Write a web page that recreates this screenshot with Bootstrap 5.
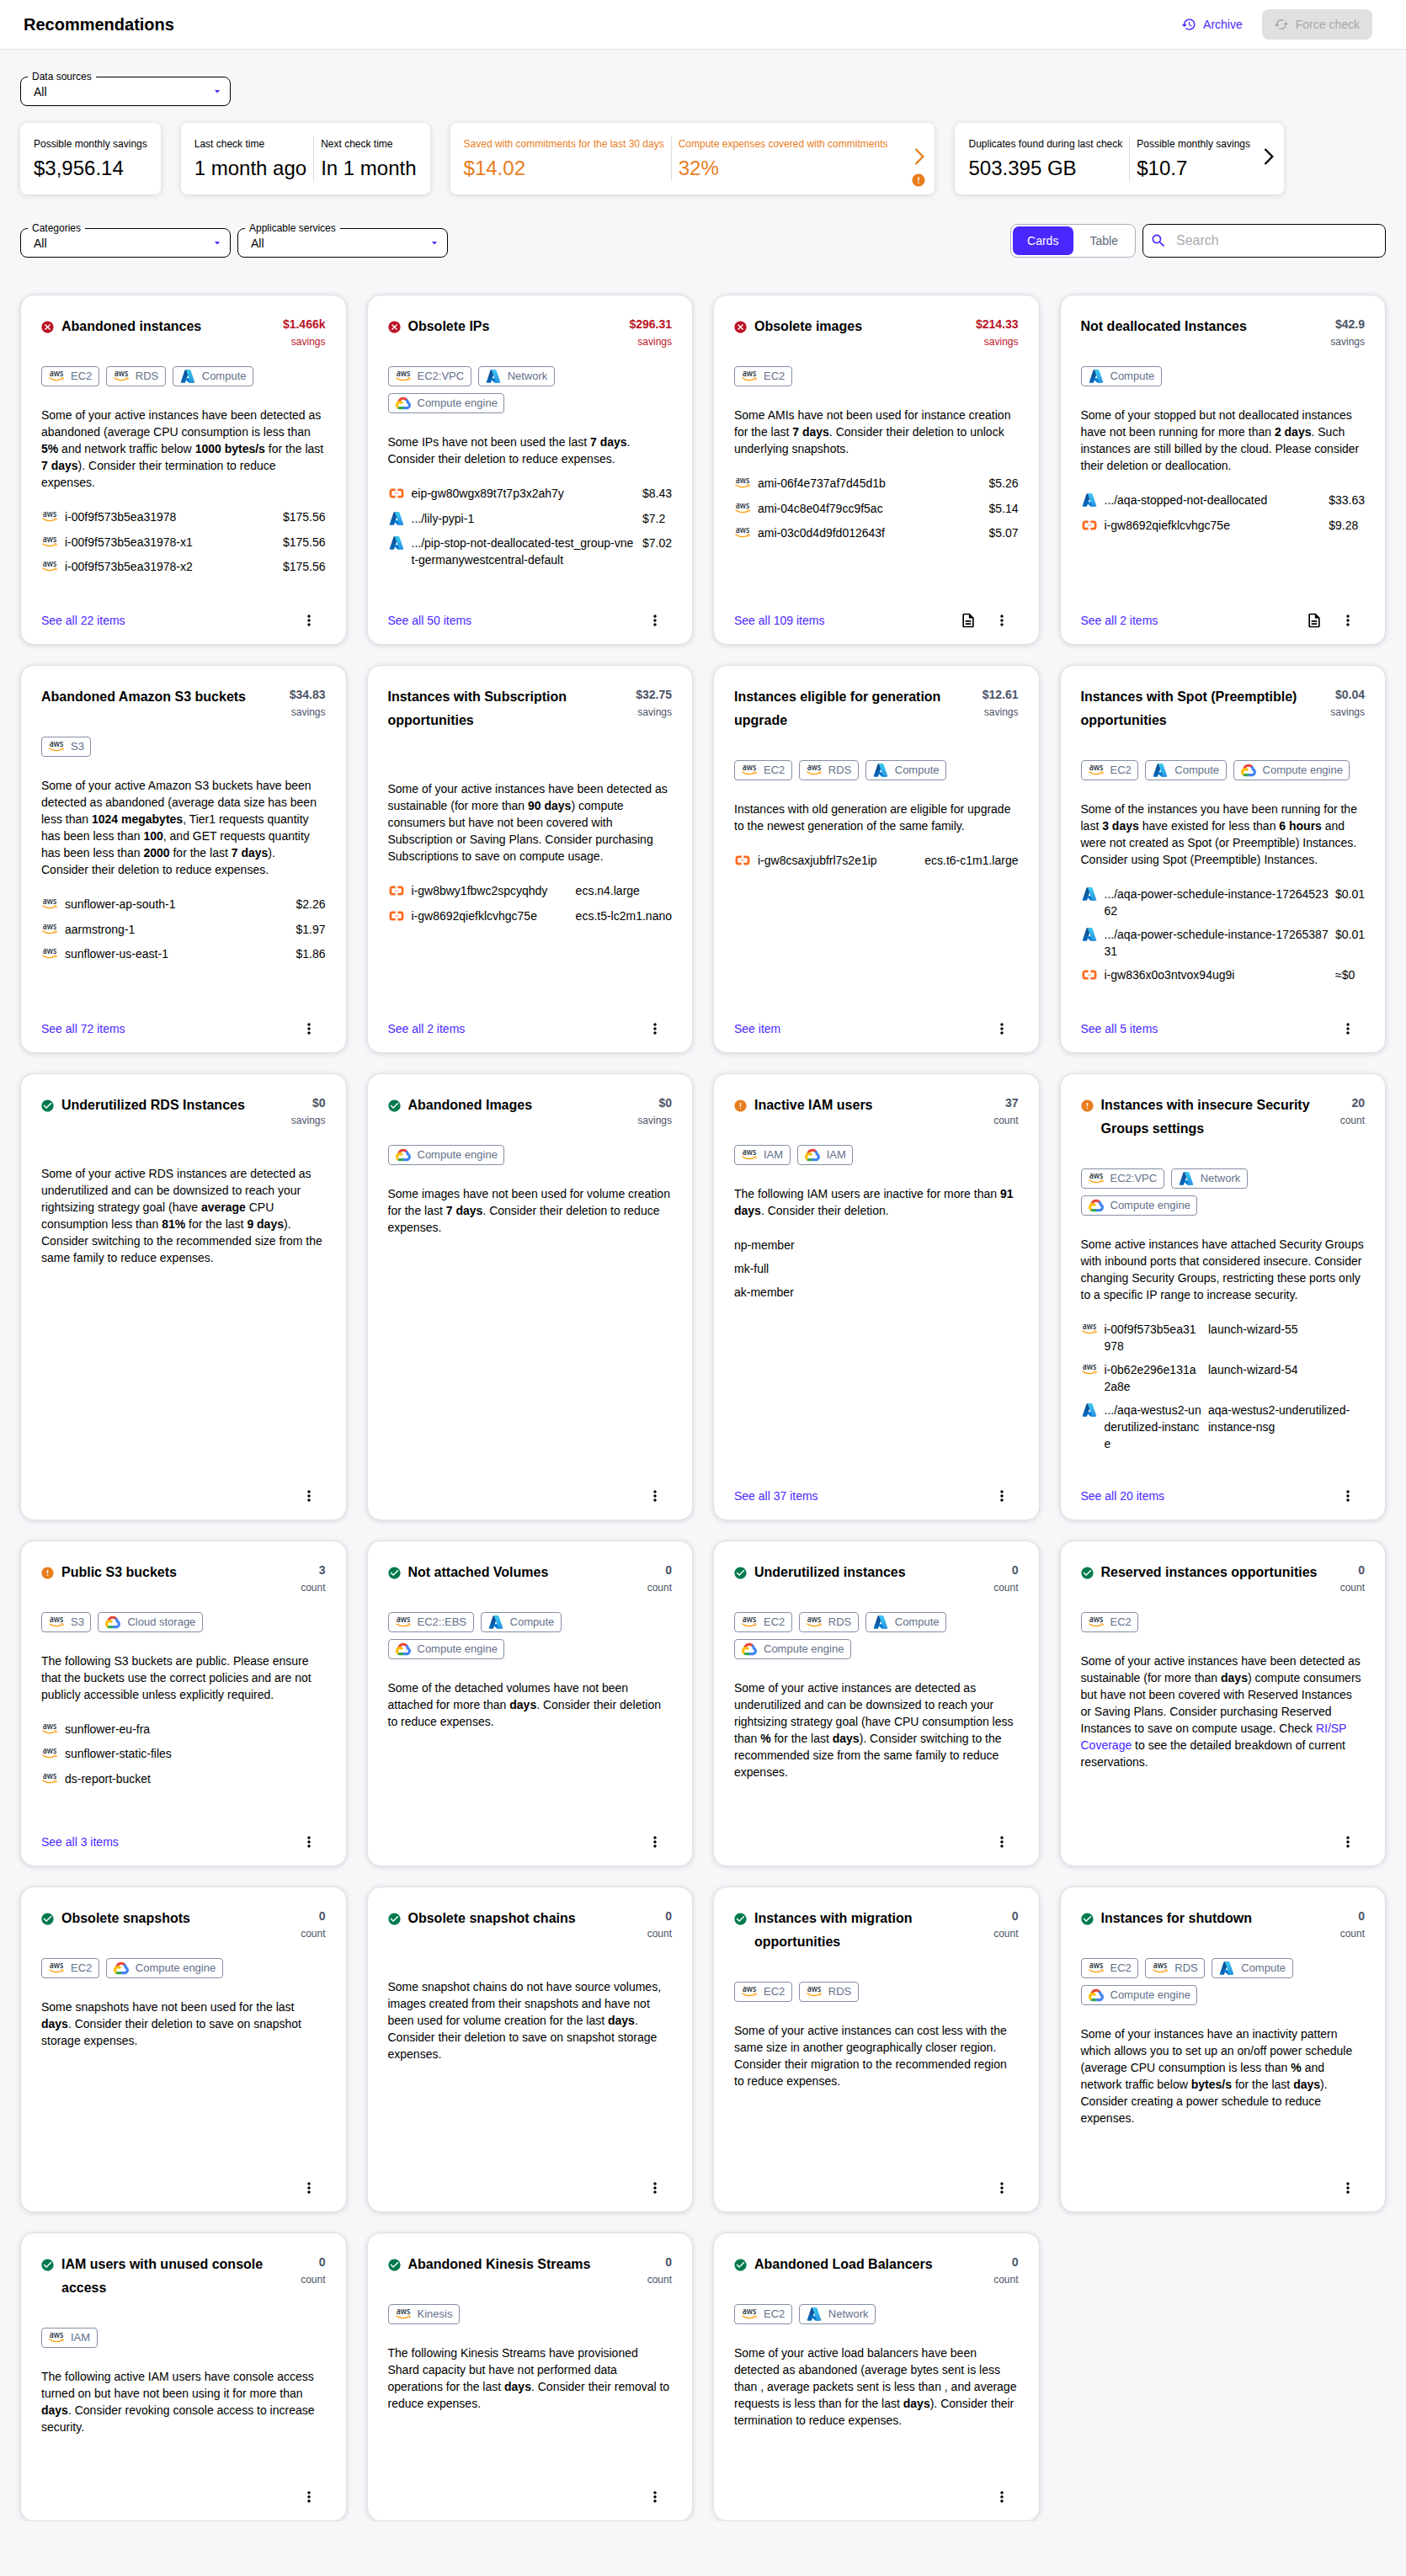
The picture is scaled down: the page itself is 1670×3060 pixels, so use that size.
<!DOCTYPE html>
<html lang="en">
<head>
<meta charset="utf-8">
<meta name="viewport" content="width=device-width, initial-scale=1">
<title>Recommendations</title>
<link href="https://cdn.jsdelivr.net/npm/bootstrap@5.3.0/dist/css/bootstrap.min.css" rel="stylesheet">
<style>
body{font-family:"Liberation Sans",Arial,sans-serif;font-size:14px;line-height:20px;color:#000;background:#f6f7f9}
a{color:#4a27ff;text-decoration:none}
svg{display:block;flex:none}
.topbar{height:59px;background:#fff;border-bottom:1px solid #e1e3e5;padding:0 40px 0 28px}
.topbar h1{font-size:20px;line-height:28px;font-weight:700}
.btn-archive{font-size:14px;line-height:20px;color:#4a27ff;padding:8px 15px 8px 16px;gap:8px;display:flex;align-items:center}
.btn-force{font-size:14px;line-height:20px;color:#a8a8a8;background:#e0e0e0;border-radius:8px;height:36px;padding:0 15px 0 14px;gap:8px;display:flex;align-items:center}
.picker{width:250px;height:41px;margin:0;padding:1px 11px 0 15px;border:1px solid #000;border-radius:8px;background:#fff}
.picker legend{float:none;width:auto;font-size:12px;line-height:12px;margin:0 0 0 -7px;padding:0 5px}
.picker-val{display:flex;justify-content:space-between;align-items:center;height:22px}
.summary{margin-top:20px}
.filters{margin-top:34px}
.tile{background:#fff;border-radius:8px;height:85px;padding:16px;box-shadow:0 1px 7px rgba(20,22,35,.15);display:flex}
.tile-go{padding-right:12px}
.tile-col{padding-right:8px}
.tile-col+.tile-col{border-left:1px solid #d9dbe0;padding-left:8px}
.tile-col:last-of-type{padding-right:0}
.tile-cap{font-size:12px;line-height:18px;white-space:nowrap}
.tile-num{font-size:24px;line-height:32px;white-space:nowrap;margin-top:4px}
.tile-warn{color:#e87d1e}
.tile-side{display:flex;flex-direction:column;align-items:center;width:12px;margin-left:16px;padding-top:14px}
.tile-warn .tile-side{margin-left:32px}
.tile-alert{margin:9px 0 0 -2px}
.switcher{width:149px;height:40px;border:1px solid #abafb9;border-radius:8px;background:#fff;padding:2px}
.switcher .btn{font-size:14px;line-height:20px;width:72px;padding:0;border:0;border-radius:7px;color:#60687c}
.switcher .btn:last-child{padding-left:2px}
.switcher .btn.active{background:#4a27ff;color:#fff}
.finder{width:289px;height:40px;border:1px solid #000;border-radius:8px;background:#fff;padding:0 8px;gap:11px}
.finder input{border:0;outline:0;width:220px;font-size:16px;padding:0;background:none}
.finder input::placeholder{color:#a9aab0;opacity:1}
.rec-grid{display:grid;grid-template-columns:repeat(4,minmax(0,1fr));gap:24px;margin-top:44px}
.rec{background:#fff;border:1px solid #e0e1e4;border-radius:16px;padding:23px 24px 12px;box-shadow:0 1px 6px rgba(20,22,35,.14);display:flex;flex-direction:column}
.rec-head{display:flex;justify-content:space-between;align-items:flex-start;gap:8px}
.rec-title{font-size:16px;line-height:28px;font-weight:700;margin:0;padding-bottom:33px;display:flex}
.rec-title svg{width:17px;height:17px;margin:6px 8px 0 -1px}
.rec-sum{text-align:right;color:#4c5567;font-size:12px;line-height:20px}
.rec-sum b{display:block;font-size:14px;line-height:22px}
.rec-sum.hot{color:#bb1425}
.tags{display:flex;flex-wrap:wrap;gap:8px}
.tag{height:24px;border:1px solid #858fa3;border-radius:4px;padding:0 7.500px 0 8px;gap:8px;display:flex;align-items:center;font-size:13px;color:#64708a}
.rec-text{margin:24px 0 17px}
.items{width:100%;min-height:8px;border-collapse:collapse;margin:0}
.items td{padding:4px 0;vertical-align:top;line-height:20px}
.items td:first-child{width:100%;word-break:break-all}
.items td:nth-child(2){padding-left:8px;white-space:nowrap}
.items.wide td:nth-child(2){white-space:normal;min-width:194px}
.nm{display:flex;min-height:21.67px;padding-left:1px;gap:9px}
.nm svg{margin-top:1px}
.rec-foot{margin-top:auto;padding-top:32px;display:flex;align-items:center;justify-content:space-between}
.rec-foot .tools{display:flex;margin-left:auto}
.rec-foot .tool{width:40px;height:32px;display:flex;align-items:center;justify-content:center;border:0;background:none;padding:0;color:#000}
</style>
<script src="https://cdn.jsdelivr.net/npm/bootstrap@5.3.0/dist/js/bootstrap.bundle.min.js"></script>
</head>
<body>
<svg width="0" height="0" class="position-absolute">
<defs>
<linearGradient id="azA" x1="0.6" y1="0" x2="0.3" y2="1"><stop offset="0" stop-color="#114a8b"/><stop offset="1" stop-color="#0669bc"/></linearGradient>
<linearGradient id="azB" x1="0.4" y1="0" x2="0.6" y2="1"><stop offset="0" stop-color="#3ccbf4"/><stop offset="1" stop-color="#2892df"/></linearGradient>
<symbol id="aws" viewBox="0 0 18 18"><text x="9" y="9.300" text-anchor="middle" textLength="16.500" lengthAdjust="spacingAndGlyphs" font-family="Open Sans,sans-serif" font-weight="600" font-size="10.500" fill="#252f3e">aws</text><path d="M.8 11c4.600 3.300 10.800 3.400 14.800 1.100" fill="none" stroke="#f90" stroke-width="1.200" stroke-linecap="round"/><path d="M14.300 11.100c1.200-.5 2.700-.4 2.900-.1.200.4-.1 1.700-.9 2.600" fill="none" stroke="#f90" stroke-width="1"/></symbol>
<symbol id="azure" viewBox="0 0 96 96"><path fill="url(#azA)" d="M33.338 6.544h26.038l-27.03 80.087a4.152 4.152 0 0 1-3.933 2.824H8.149a4.145 4.145 0 0 1-3.928-5.470L29.404 9.368a4.152 4.152 0 0 1 3.934-2.825z"/><path fill="#0078d4" d="M71.175 60.261h-41.290a1.911 1.911 0 0 0-1.305 3.309l26.532 24.764a4.171 4.171 0 0 0 2.846 1.121h23.380z"/><path fill="url(#azB)" d="M66.595 9.364a4.145 4.145 0 0 0-3.928-2.820H33.648a4.146 4.146 0 0 1 3.928 2.820l25.184 74.620a4.146 4.146 0 0 1-3.928 5.472h29.020a4.146 4.146 0 0 0 3.927-5.472z"/></symbol>
<symbol id="gcp" viewBox="0 0 256 206"><path fill="#ea4335" d="M170.252 56.819l22.253-22.253 1.483-9.370C153.437-11.677 88.976-7.496 52.420 33.920 42.267 45.423 34.734 59.764 30.717 74.573l7.970-1.123 44.505-7.340 3.436-3.513c19.797-21.742 53.270-24.667 76.128-6.168l7.496.39z"/><path fill="#4285f4" d="M224.205 73.918a100.249 100.249 0 0 0-30.217-48.722l-31.232 31.232a55.515 55.515 0 0 1 20.379 44.037v5.544c15.350 0 27.797 12.445 27.797 27.796 0 15.352-12.446 27.573-27.797 27.573h-55.671l-5.466 5.934v33.340l5.466 5.231h55.670c39.930.311 72.553-31.494 72.864-71.424a72.303 72.303 0 0 0-31.793-60.540"/><path fill="#34a853" d="M71.870 205.796h55.593V161.290H71.870a27.275 27.275 0 0 1-11.500-2.498l-7.887 2.420-22.409 22.253-1.952 7.574c12.567 9.489 27.900 14.825 43.647 14.757"/><path fill="#fbbc05" d="M71.870 61.425C31.940 61.664-.237 94.228.001 134.158a72.301 72.301 0 0 0 28.222 56.880l32.248-32.246c-13.990-6.322-20.208-22.786-13.887-36.776 6.320-13.990 22.786-20.208 36.775-13.888a27.796 27.796 0 0 1 13.887 13.888l32.248-32.248A72.224 72.224 0 0 0 71.870 61.425"/></symbol>
<symbol id="ali" viewBox="0 0 18 18"><path d="M7.600 4.800H3.900A2.100 2.100 0 0 0 1.900 6.800v4.400a2.100 2.100 0 0 0 2 2h3.700M10.400 4.800h3.700a2.100 2.100 0 0 1 2 2v4.400a2.100 2.100 0 0 1-2 2h-3.700" fill="none" stroke="#ff6a1f" stroke-width="2.700"/><path d="M7.200 9h3.600" stroke="#ff6a1f" stroke-width=".8"/></symbol>
<symbol id="bad" viewBox="0 0 24 24"><path fill="#bb1425" d="M12 2C6.470 2 2 6.470 2 12s4.470 10 10 10 10-4.470 10-10S17.530 2 12 2zm5 13.590L15.590 17 12 13.410 8.410 17 7 15.590 10.590 12 7 8.410 8.410 7 12 10.590 15.590 7 17 8.410 13.410 12z"/></symbol>
<symbol id="good" viewBox="0 0 24 24"><path fill="#007a4d" d="M12 2C6.480 2 2 6.480 2 12s4.480 10 10 10 10-4.480 10-10S17.520 2 12 2zm-2 15-5-5 1.410-1.410L10 14.170l7.590-7.590L19 8z"/></symbol>
<symbol id="warn" viewBox="0 0 24 24"><path fill="#e87d1e" d="M12 2C6.480 2 2 6.480 2 12s4.480 10 10 10 10-4.480 10-10S17.520 2 12 2zm1 15h-2v-2h2zm0-4h-2V7h2z"/></symbol>
<symbol id="dots" viewBox="0 0 24 24"><path d="M12 8c1.100 0 2-.9 2-2s-.9-2-2-2-2 .9-2 2 .9 2 2 2m0 2c-1.100 0-2 .9-2 2s.9 2 2 2 2-.9 2-2-.9-2-2-2m0 6c-1.100 0-2 .9-2 2s.9 2 2 2 2-.9 2-2-.9-2-2-2"/></symbol>
<symbol id="doc" viewBox="0 0 24 24"><path d="M8 16h8v2H8zm0-4h8v2H8zm6-10H6c-1.100 0-2 .9-2 2v16c0 1.100.89 2 1.990 2H18c1.100 0 2-.9 2-2V8zm4 18H6V4h7v5h5z"/></symbol>
<symbol id="caret" viewBox="0 0 6 4"><path fill="#4a27ff" d="M0 0h6L3 3.600z"/></symbol>
<symbol id="chev" viewBox="0 0 12 20"><path d="M1.500 1l8.800 9-8.800 9" fill="none" stroke="currentColor" stroke-width="2.300"/></symbol>
</defs>
</svg>

<header class="topbar d-flex align-items-center justify-content-between">
<h1 class="m-0">Recommendations</h1>
<div class="d-flex align-items-center gap-2">
<a href="#" class="btn-archive"><svg width="18" height="18" viewBox="0 0 24 24" fill="currentColor"><path d="M13 3c-4.970 0-9 4.030-9 9H1l3.890 3.890.07.14L9 12H6c0-3.870 3.130-7 7-7s7 3.130 7 7-3.130 7-7 7c-1.930 0-3.680-.79-4.940-2.060l-1.420 1.420C8.270 19.990 10.510 21 13 21c4.970 0 9-4.030 9-9s-4.030-9-9-9zm-1 5v5l4.280 2.540.72-1.210-3.500-2.080V8z"/></svg>Archive</a>
<button class="btn-force border-0" disabled><svg width="18" height="18" viewBox="0 0 24 24" fill="currentColor"><path d="m19 8-4 4h3c0 3.310-2.690 6-6 6-1.010 0-1.970-.25-2.800-.7l-1.460 1.460C8.970 19.540 10.430 20 12 20c4.420 0 8-3.580 8-8h3zM6 12c0-3.310 2.690-6 6-6 1.010 0 1.970.25 2.800.7l1.460-1.460C15.030 4.460 13.570 4 12 4c-4.420 0-8 3.580-8 8H1l4 4 4-4z"/></svg>Force check</button>
</div>
</header>

<main class="px-4">
<div class="pt-4"><fieldset class="picker" style="margin-top:2px"><legend>Data sources</legend><div class="picker-val">All<svg width="8" height="4"><use href="#caret"/></svg></div></fieldset></div>

<section class="summary d-flex gap-4">
<div class="tile"><div class="tile-col"><div class="tile-cap">Possible monthly savings</div><div class="tile-num">$3,956.14</div></div></div>
<div class="tile"><div class="tile-col"><div class="tile-cap">Last check time</div><div class="tile-num">1 month ago</div></div><div class="tile-col"><div class="tile-cap">Next check time</div><div class="tile-num">In 1 month</div></div></div>
<div class="tile tile-go tile-warn"><div class="tile-col"><div class="tile-cap">Saved with commitments for the last 30 days</div><div class="tile-num">$14.02</div></div><div class="tile-col"><div class="tile-cap">Compute expenses covered with commitments</div><div class="tile-num">32%</div></div><aside class="tile-side"><svg width="12" height="20"><use href="#chev"/></svg><svg class="tile-alert" width="18" height="18"><use href="#warn"/></svg></aside></div>
<div class="tile tile-go"><div class="tile-col"><div class="tile-cap">Duplicates found during last check</div><div class="tile-num">503.395 GB</div></div><div class="tile-col"><div class="tile-cap">Possible monthly savings</div><div class="tile-num">$10.7</div></div><aside class="tile-side"><svg width="12" height="20"><use href="#chev"/></svg></aside></div>
</section>

<section class="filters d-flex align-items-end gap-2">
<fieldset class="picker"><legend>Categories</legend><div class="picker-val">All<svg width="8" height="4"><use href="#caret"/></svg></div></fieldset>
<fieldset class="picker"><legend>Applicable services</legend><div class="picker-val">All<svg width="8" height="4"><use href="#caret"/></svg></div></fieldset>
<div class="switcher d-flex ms-auto"><button class="btn active">Cards</button><button class="btn">Table</button></div>
<div class="finder d-flex align-items-center"><svg width="20" height="20" viewBox="0 0 24 24" fill="#4a27ff"><path d="M15.500 14h-.79l-.28-.27C15.410 12.590 16 11.110 16 9.500 16 5.910 13.090 3 9.500 3S3 5.910 3 9.500 5.910 16 9.500 16c1.610 0 3.090-.59 4.230-1.570l.27.28v.79l5 4.990L20.490 19zm-6 0C7.010 14 5 11.990 5 9.500S7.010 5 9.500 5 14 7.010 14 9.500 11.990 14 9.500 14"/></svg><input type="text" placeholder="Search"></div>
</section>

<section class="rec-grid">

<article class="rec"><div class="rec-head"><h2 class="rec-title"><svg><use href="#bad"/></svg>Abandoned instances</h2><div class="rec-sum hot"><b>$1.466k</b>savings</div></div>
<div class="tags"><span class="tag"><svg width="18" height="18"><use href="#aws"/></svg>EC2</span><span class="tag"><svg width="18" height="18"><use href="#aws"/></svg>RDS</span><span class="tag"><svg width="18" height="18"><use href="#azure"/></svg>Compute</span></div>
<p class="rec-text">Some of your active instances have been detected as abandoned (average CPU consumption is less than <b>5%</b> and network traffic below <b>1000 bytes/s</b> for the last <b>7 days</b>). Consider their termination to reduce expenses.</p>
<table class="items"><tr><td><div class="nm"><svg width="18" height="18"><use href="#aws"/></svg>i-00f9f573b5ea31978</div></td><td>$175.56</td></tr><tr><td><div class="nm"><svg width="18" height="18"><use href="#aws"/></svg>i-00f9f573b5ea31978-x1</div></td><td>$175.56</td></tr><tr><td><div class="nm"><svg width="18" height="18"><use href="#aws"/></svg>i-00f9f573b5ea31978-x2</div></td><td>$175.56</td></tr></table>
<div class="rec-foot"><a href="#">See all 22 items</a><div class="tools"><button class="tool"><svg width="20" height="20"><use href="#dots"/></svg></button></div></div></article>

<article class="rec"><div class="rec-head"><h2 class="rec-title"><svg><use href="#bad"/></svg>Obsolete IPs</h2><div class="rec-sum hot"><b>$296.31</b>savings</div></div>
<div class="tags"><span class="tag"><svg width="18" height="18"><use href="#aws"/></svg>EC2:VPC</span><span class="tag"><svg width="18" height="18"><use href="#azure"/></svg>Network</span><span class="tag"><svg width="18" height="18"><use href="#gcp"/></svg>Compute engine</span></div>
<p class="rec-text">Some IPs have not been used the last <b>7 days</b>. Consider their deletion to reduce expenses.</p>
<table class="items"><tr><td><div class="nm"><svg width="18" height="18"><use href="#ali"/></svg>eip-gw80wgx89t7t7p3x2ah7y</div></td><td>$8.43</td></tr><tr><td><div class="nm"><svg width="18" height="18"><use href="#azure"/></svg>.../lily-pypi-1</div></td><td>$7.2</td></tr><tr><td><div class="nm"><svg width="18" height="18"><use href="#azure"/></svg>.../pip-stop-not-deallocated-test_group-vnet-germanywestcentral-default</div></td><td>$7.02</td></tr></table>
<div class="rec-foot"><a href="#">See all 50 items</a><div class="tools"><button class="tool"><svg width="20" height="20"><use href="#dots"/></svg></button></div></div></article>

<article class="rec"><div class="rec-head"><h2 class="rec-title"><svg><use href="#bad"/></svg>Obsolete images</h2><div class="rec-sum hot"><b>$214.33</b>savings</div></div>
<div class="tags"><span class="tag"><svg width="18" height="18"><use href="#aws"/></svg>EC2</span></div>
<p class="rec-text">Some AMIs have not been used for instance creation for the last <b>7 days</b>. Consider their deletion to unlock underlying snapshots.</p>
<table class="items"><tr><td><div class="nm"><svg width="18" height="18"><use href="#aws"/></svg>ami-06f4e737af7d45d1b</div></td><td>$5.26</td></tr><tr><td><div class="nm"><svg width="18" height="18"><use href="#aws"/></svg>ami-04c8e04f79cc9f5ac</div></td><td>$5.14</td></tr><tr><td><div class="nm"><svg width="18" height="18"><use href="#aws"/></svg>ami-03c0d4d9fd012643f</div></td><td>$5.07</td></tr></table>
<div class="rec-foot"><a href="#">See all 109 items</a><div class="tools"><button class="tool"><svg width="20" height="20"><use href="#doc"/></svg></button><button class="tool"><svg width="20" height="20"><use href="#dots"/></svg></button></div></div></article>

<article class="rec"><div class="rec-head"><h2 class="rec-title">Not deallocated Instances</h2><div class="rec-sum"><b>$42.9</b>savings</div></div>
<div class="tags"><span class="tag"><svg width="18" height="18"><use href="#azure"/></svg>Compute</span></div>
<p class="rec-text">Some of your stopped but not deallocated instances have not been running for more than <b>2 days</b>. Such instances are still billed by the cloud. Please consider their deletion or deallocation.</p>
<table class="items"><tr><td><div class="nm"><svg width="18" height="18"><use href="#azure"/></svg>.../aqa-stopped-not-deallocated</div></td><td>$33.63</td></tr><tr><td><div class="nm"><svg width="18" height="18"><use href="#ali"/></svg>i-gw8692qiefklcvhgc75e</div></td><td>$9.28</td></tr></table>
<div class="rec-foot"><a href="#">See all 2 items</a><div class="tools"><button class="tool"><svg width="20" height="20"><use href="#doc"/></svg></button><button class="tool"><svg width="20" height="20"><use href="#dots"/></svg></button></div></div></article>

<article class="rec"><div class="rec-head"><h2 class="rec-title">Abandoned Amazon S3 buckets</h2><div class="rec-sum"><b>$34.83</b>savings</div></div>
<div class="tags"><span class="tag"><svg width="18" height="18"><use href="#aws"/></svg>S3</span></div>
<p class="rec-text">Some of your active Amazon S3 buckets have been detected as abandoned (average data size has been less than <b>1024 megabytes</b>, Tier1 requests quantity has been less than <b>100</b>, and GET requests quantity has been less than <b>2000</b> for the last <b>7 days</b>). Consider their deletion to reduce expenses.</p>
<table class="items"><tr><td><div class="nm"><svg width="18" height="18"><use href="#aws"/></svg>sunflower-ap-south-1</div></td><td>$2.26</td></tr><tr><td><div class="nm"><svg width="18" height="18"><use href="#aws"/></svg>aarmstrong-1</div></td><td>$1.97</td></tr><tr><td><div class="nm"><svg width="18" height="18"><use href="#aws"/></svg>sunflower-us-east-1</div></td><td>$1.86</td></tr></table>
<div class="rec-foot"><a href="#">See all 72 items</a><div class="tools"><button class="tool"><svg width="20" height="20"><use href="#dots"/></svg></button></div></div></article>

<article class="rec"><div class="rec-head"><h2 class="rec-title">Instances with Subscription opportunities</h2><div class="rec-sum"><b>$32.75</b>savings</div></div>
<p class="rec-text">Some of your active instances have been detected as sustainable (for more than <b>90 days</b>) compute consumers but have not been covered with Subscription or Saving Plans. Consider purchasing Subscriptions to save on compute usage.</p>
<table class="items"><tr><td><div class="nm"><svg width="18" height="18"><use href="#ali"/></svg>i-gw8bwy1fbwc2spcyqhdy</div></td><td>ecs.n4.large</td></tr><tr><td><div class="nm"><svg width="18" height="18"><use href="#ali"/></svg>i-gw8692qiefklcvhgc75e</div></td><td>ecs.t5-lc2m1.nano</td></tr></table>
<div class="rec-foot"><a href="#">See all 2 items</a><div class="tools"><button class="tool"><svg width="20" height="20"><use href="#dots"/></svg></button></div></div></article>

<article class="rec"><div class="rec-head"><h2 class="rec-title">Instances eligible for generation upgrade</h2><div class="rec-sum"><b>$12.61</b>savings</div></div>
<div class="tags"><span class="tag"><svg width="18" height="18"><use href="#aws"/></svg>EC2</span><span class="tag"><svg width="18" height="18"><use href="#aws"/></svg>RDS</span><span class="tag"><svg width="18" height="18"><use href="#azure"/></svg>Compute</span></div>
<p class="rec-text">Instances with old generation are eligible for upgrade to the newest generation of the same family.</p>
<table class="items"><tr><td><div class="nm"><svg width="18" height="18"><use href="#ali"/></svg>i-gw8csaxjubfrl7s2e1ip</div></td><td>ecs.t6-c1m1.large</td></tr></table>
<div class="rec-foot"><a href="#">See item</a><div class="tools"><button class="tool"><svg width="20" height="20"><use href="#dots"/></svg></button></div></div></article>

<article class="rec"><div class="rec-head"><h2 class="rec-title">Instances with Spot (Preemptible) opportunities</h2><div class="rec-sum"><b>$0.04</b>savings</div></div>
<div class="tags"><span class="tag"><svg width="18" height="18"><use href="#aws"/></svg>EC2</span><span class="tag"><svg width="18" height="18"><use href="#azure"/></svg>Compute</span><span class="tag"><svg width="18" height="18"><use href="#gcp"/></svg>Compute engine</span></div>
<p class="rec-text">Some of the instances you have been running for the last <b>3 days</b> have existed for less than <b>6 hours</b> and were not created as Spot (or Preemptible) Instances. Consider using Spot (Preemptible) Instances.</p>
<table class="items"><tr><td><div class="nm"><svg width="18" height="18"><use href="#azure"/></svg>.../aqa-power-schedule-instance-1726452362</div></td><td>$0.01</td></tr><tr><td><div class="nm"><svg width="18" height="18"><use href="#azure"/></svg>.../aqa-power-schedule-instance-1726538731</div></td><td>$0.01</td></tr><tr><td><div class="nm"><svg width="18" height="18"><use href="#ali"/></svg>i-gw836x0o3ntvox94ug9i</div></td><td>≈$0</td></tr></table>
<div class="rec-foot"><a href="#">See all 5 items</a><div class="tools"><button class="tool"><svg width="20" height="20"><use href="#dots"/></svg></button></div></div></article>

<article class="rec"><div class="rec-head"><h2 class="rec-title"><svg><use href="#good"/></svg>Underutilized RDS Instances</h2><div class="rec-sum"><b>$0</b>savings</div></div>
<p class="rec-text">Some of your active RDS instances are detected as underutilized and can be downsized to reach your rightsizing strategy goal (have <b>average</b> CPU consumption less than <b>81%</b> for the last <b>9 days</b>). Consider switching to the recommended size from the same family to reduce expenses.</p>
<div class="rec-foot"><div class="tools"><button class="tool"><svg width="20" height="20"><use href="#dots"/></svg></button></div></div></article>

<article class="rec"><div class="rec-head"><h2 class="rec-title"><svg><use href="#good"/></svg>Abandoned Images</h2><div class="rec-sum"><b>$0</b>savings</div></div>
<div class="tags"><span class="tag"><svg width="18" height="18"><use href="#gcp"/></svg>Compute engine</span></div>
<p class="rec-text">Some images have not been used for volume creation for the last <b>7 days</b>. Consider their deletion to reduce expenses.</p>
<div class="rec-foot"><div class="tools"><button class="tool"><svg width="20" height="20"><use href="#dots"/></svg></button></div></div></article>

<article class="rec"><div class="rec-head"><h2 class="rec-title"><svg><use href="#warn"/></svg>Inactive IAM users</h2><div class="rec-sum"><b>37</b>count</div></div>
<div class="tags"><span class="tag"><svg width="18" height="18"><use href="#aws"/></svg>IAM</span><span class="tag"><svg width="18" height="18"><use href="#gcp"/></svg>IAM</span></div>
<p class="rec-text">The following IAM users are inactive for more than <b>91 days</b>. Consider their deletion.</p>
<table class="items"><tr><td>np-member</td></tr><tr><td>mk-full</td></tr><tr><td>ak-member</td></tr></table>
<div class="rec-foot"><a href="#">See all 37 items</a><div class="tools"><button class="tool"><svg width="20" height="20"><use href="#dots"/></svg></button></div></div></article>

<article class="rec"><div class="rec-head"><h2 class="rec-title"><svg><use href="#warn"/></svg>Instances with insecure Security Groups settings</h2><div class="rec-sum"><b>20</b>count</div></div>
<div class="tags"><span class="tag"><svg width="18" height="18"><use href="#aws"/></svg>EC2:VPC</span><span class="tag"><svg width="18" height="18"><use href="#azure"/></svg>Network</span><span class="tag"><svg width="18" height="18"><use href="#gcp"/></svg>Compute engine</span></div>
<p class="rec-text">Some active instances have attached Security Groups with inbound ports that considered insecure. Consider changing Security Groups, restricting these ports only to a specific IP range to increase security.</p>
<table class="items wide"><tr><td><div class="nm"><svg width="18" height="18"><use href="#aws"/></svg>i-00f9f573b5ea31978</div></td><td>launch-wizard-55</td></tr><tr><td><div class="nm"><svg width="18" height="18"><use href="#aws"/></svg>i-0b62e296e131a2a8e</div></td><td>launch-wizard-54</td></tr><tr><td><div class="nm"><svg width="18" height="18"><use href="#azure"/></svg>.../aqa-westus2-underutilized-instance</div></td><td>aqa-westus2-underutilized-instance-nsg</td></tr></table>
<div class="rec-foot"><a href="#">See all 20 items</a><div class="tools"><button class="tool"><svg width="20" height="20"><use href="#dots"/></svg></button></div></div></article>

<article class="rec"><div class="rec-head"><h2 class="rec-title"><svg><use href="#warn"/></svg>Public S3 buckets</h2><div class="rec-sum"><b>3</b>count</div></div>
<div class="tags"><span class="tag"><svg width="18" height="18"><use href="#aws"/></svg>S3</span><span class="tag"><svg width="18" height="18"><use href="#gcp"/></svg>Cloud storage</span></div>
<p class="rec-text">The following S3 buckets are public. Please ensure that the buckets use the correct policies and are not publicly accessible unless explicitly required.</p>
<table class="items"><tr><td><div class="nm"><svg width="18" height="18"><use href="#aws"/></svg>sunflower-eu-fra</div></td></tr><tr><td><div class="nm"><svg width="18" height="18"><use href="#aws"/></svg>sunflower-static-files</div></td></tr><tr><td><div class="nm"><svg width="18" height="18"><use href="#aws"/></svg>ds-report-bucket</div></td></tr></table>
<div class="rec-foot"><a href="#">See all 3 items</a><div class="tools"><button class="tool"><svg width="20" height="20"><use href="#dots"/></svg></button></div></div></article>

<article class="rec"><div class="rec-head"><h2 class="rec-title"><svg><use href="#good"/></svg>Not attached Volumes</h2><div class="rec-sum"><b>0</b>count</div></div>
<div class="tags"><span class="tag"><svg width="18" height="18"><use href="#aws"/></svg>EC2::EBS</span><span class="tag"><svg width="18" height="18"><use href="#azure"/></svg>Compute</span><span class="tag"><svg width="18" height="18"><use href="#gcp"/></svg>Compute engine</span></div>
<p class="rec-text">Some of the detached volumes have not been attached for more than <b>days</b>. Consider their deletion to reduce expenses.</p>
<div class="rec-foot"><div class="tools"><button class="tool"><svg width="20" height="20"><use href="#dots"/></svg></button></div></div></article>

<article class="rec"><div class="rec-head"><h2 class="rec-title"><svg><use href="#good"/></svg>Underutilized instances</h2><div class="rec-sum"><b>0</b>count</div></div>
<div class="tags"><span class="tag"><svg width="18" height="18"><use href="#aws"/></svg>EC2</span><span class="tag"><svg width="18" height="18"><use href="#aws"/></svg>RDS</span><span class="tag"><svg width="18" height="18"><use href="#azure"/></svg>Compute</span><span class="tag"><svg width="18" height="18"><use href="#gcp"/></svg>Compute engine</span></div>
<p class="rec-text">Some of your active instances are detected as underutilized and can be downsized to reach your rightsizing strategy goal (have CPU consumption less than <b>%</b> for the last <b>days</b>). Consider switching to the recommended size from the same family to reduce expenses.</p>
<div class="items"></div>
<div class="rec-foot"><div class="tools"><button class="tool"><svg width="20" height="20"><use href="#dots"/></svg></button></div></div></article>

<article class="rec"><div class="rec-head"><h2 class="rec-title"><svg><use href="#good"/></svg>Reserved instances opportunities</h2><div class="rec-sum"><b>0</b>count</div></div>
<div class="tags"><span class="tag"><svg width="18" height="18"><use href="#aws"/></svg>EC2</span></div>
<p class="rec-text">Some of your active instances have been detected as sustainable (for more than <b>days</b>) compute consumers but have not been covered with Reserved Instances or Saving Plans. Consider purchasing Reserved Instances to save on compute usage. Check <a href="#">RI/SP Coverage</a> to see the detailed breakdown of current reservations.</p>
<div class="rec-foot"><div class="tools"><button class="tool"><svg width="20" height="20"><use href="#dots"/></svg></button></div></div></article>

<article class="rec"><div class="rec-head"><h2 class="rec-title"><svg><use href="#good"/></svg>Obsolete snapshots</h2><div class="rec-sum"><b>0</b>count</div></div>
<div class="tags"><span class="tag"><svg width="18" height="18"><use href="#aws"/></svg>EC2</span><span class="tag"><svg width="18" height="18"><use href="#gcp"/></svg>Compute engine</span></div>
<p class="rec-text">Some snapshots have not been used for the last <b>days</b>. Consider their deletion to save on snapshot storage expenses.</p>
<div class="rec-foot"><div class="tools"><button class="tool"><svg width="20" height="20"><use href="#dots"/></svg></button></div></div></article>

<article class="rec"><div class="rec-head"><h2 class="rec-title"><svg><use href="#good"/></svg>Obsolete snapshot chains</h2><div class="rec-sum"><b>0</b>count</div></div>
<p class="rec-text">Some snapshot chains do not have source volumes, images created from their snapshots and have not been used for volume creation for the last <b>days</b>. Consider their deletion to save on snapshot storage expenses.</p>
<div class="rec-foot"><div class="tools"><button class="tool"><svg width="20" height="20"><use href="#dots"/></svg></button></div></div></article>

<article class="rec"><div class="rec-head"><h2 class="rec-title"><svg><use href="#good"/></svg>Instances with migration opportunities</h2><div class="rec-sum"><b>0</b>count</div></div>
<div class="tags"><span class="tag"><svg width="18" height="18"><use href="#aws"/></svg>EC2</span><span class="tag"><svg width="18" height="18"><use href="#aws"/></svg>RDS</span></div>
<p class="rec-text">Some of your active instances can cost less with the same size in another geographically closer region. Consider their migration to the recommended region to reduce expenses.</p>
<div class="rec-foot"><div class="tools"><button class="tool"><svg width="20" height="20"><use href="#dots"/></svg></button></div></div></article>

<article class="rec"><div class="rec-head"><h2 class="rec-title"><svg><use href="#good"/></svg>Instances for shutdown</h2><div class="rec-sum"><b>0</b>count</div></div>
<div class="tags"><span class="tag"><svg width="18" height="18"><use href="#aws"/></svg>EC2</span><span class="tag"><svg width="18" height="18"><use href="#aws"/></svg>RDS</span><span class="tag"><svg width="18" height="18"><use href="#azure"/></svg>Compute</span><span class="tag"><svg width="18" height="18"><use href="#gcp"/></svg>Compute engine</span></div>
<p class="rec-text">Some of your instances have an inactivity pattern which allows you to set up an on/off power schedule (average CPU consumption is less than <b>%</b> and network traffic below <b>bytes/s</b> for the last <b>days</b>). Consider creating a power schedule to reduce expenses.</p>
<div class="items"></div>
<div class="rec-foot"><div class="tools"><button class="tool"><svg width="20" height="20"><use href="#dots"/></svg></button></div></div></article>

<article class="rec"><div class="rec-head"><h2 class="rec-title"><svg><use href="#good"/></svg>IAM users with unused console access</h2><div class="rec-sum"><b>0</b>count</div></div>
<div class="tags"><span class="tag"><svg width="18" height="18"><use href="#aws"/></svg>IAM</span></div>
<p class="rec-text">The following active IAM users have console access turned on but have not been using it for more than <b>days</b>. Consider revoking console access to increase security.</p>
<div class="items"></div>
<div class="rec-foot"><div class="tools"><button class="tool"><svg width="20" height="20"><use href="#dots"/></svg></button></div></div></article>

<article class="rec"><div class="rec-head"><h2 class="rec-title"><svg><use href="#good"/></svg>Abandoned Kinesis Streams</h2><div class="rec-sum"><b>0</b>count</div></div>
<div class="tags"><span class="tag"><svg width="18" height="18"><use href="#aws"/></svg>Kinesis</span></div>
<p class="rec-text">The following Kinesis Streams have provisioned Shard capacity but have not performed data operations for the last <b>days</b>. Consider their removal to reduce expenses.</p>
<div class="rec-foot"><div class="tools"><button class="tool"><svg width="20" height="20"><use href="#dots"/></svg></button></div></div></article>

<article class="rec"><div class="rec-head"><h2 class="rec-title"><svg><use href="#good"/></svg>Abandoned Load Balancers</h2><div class="rec-sum"><b>0</b>count</div></div>
<div class="tags"><span class="tag"><svg width="18" height="18"><use href="#aws"/></svg>EC2</span><span class="tag"><svg width="18" height="18"><use href="#azure"/></svg>Network</span></div>
<p class="rec-text">Some of your active load balancers have been detected as abandoned (average bytes sent is less than , average packets sent is less than , and average requests is less than for the last <b>days</b>). Consider their termination to reduce expenses.</p>
<div class="rec-foot"><div class="tools"><button class="tool"><svg width="20" height="20"><use href="#dots"/></svg></button></div></div></article>

</section>
</main>
</body>
</html>
